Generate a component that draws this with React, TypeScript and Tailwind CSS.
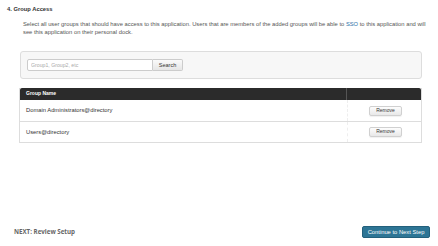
const groups = ["Domain Administrators@directory", "Users@directory"];

export default function App() {
  return (
    <div className="flex h-[246px] w-[438px] flex-col bg-white font-['Liberation_Sans',Arial,sans-serif]">
      <h2 className="pl-[7px] pt-[6px] text-[5.8px] font-bold leading-[6px] text-[#333]">4. Group Access</h2>

      <p className="ml-[23px] mt-[9px] text-[5.8px] leading-[7.5px] text-[#555]">
        Select all user groups that should have access to this application. Users that are members of the added groups will be able to{" "}
        <span className="text-[#2a6fa8]">SSO</span> to this application and will
        <br />
        see this application on their personal dock.
      </p>

      <div className="ml-[20px] mt-[15px] flex h-[28px] w-[402px] items-center rounded-[3px] border border-[#ddd] bg-[#f7f7f7] px-[6px]">
        <input
          placeholder="Group1, Group2, etc"
          className="h-[12px] w-[126px] rounded-l-[2px] border border-[#ccc] bg-white px-[3px] text-[5.2px] text-[#333] placeholder:text-[#aaa] outline-none"
        />
        <button className="h-[12px] w-[30px] rounded-r-[2px] border border-l-0 border-[#ccc] bg-gradient-to-b from-[#fafafa] to-[#e6e6e6] text-[5.5px] text-[#333]">
          Search
        </button>
      </div>

      <div className="ml-[19px] mt-[9px] w-[403px] border-x border-b border-[#ddd]">
        <div className="flex h-[12px] items-center rounded-t-[2px] bg-[#2b2b2b] text-[5px] font-bold text-white">
          <div className="flex h-full w-[327px] items-center border-r border-[#555] pl-[6px]">Group Name</div>
          <div className="flex-1" />
        </div>
        {groups.map((g, i) => (
          <div key={g} className={`flex h-[21px] items-center text-[5.8px] text-[#333] ${i > 0 ? "border-t border-[#ddd]" : ""}`}>
            <div className="flex h-full w-[328px] items-center border-r border-dashed border-[#eee] pl-[6px]">{g}</div>
            <div className="flex flex-1 justify-center pl-[2px]">
              <button className="h-[10px] w-[33px] rounded-[2px] border border-[#d0d0d0] bg-gradient-to-b from-[#fdfdfd] to-[#e8e8e8] text-[5px] text-[#333] shadow-[0_1px_1px_rgba(0,0,0,0.06)]">
                Remove
              </button>
            </div>
          </div>
        ))}
      </div>

      <div className="mt-auto flex items-center justify-between pb-[8px] pl-[14px] pr-[8px]">
        <span className="font-['Open_Sans',sans-serif] text-[6.2px] font-bold text-[#666]">NEXT: Review Setup</span>
        <button className="h-[12px] w-[68px] rounded-[2px] border border-[#23607c] bg-[#2d7595] text-[5.8px] text-white">
          Continue to Next Step
        </button>
      </div>
    </div>
  );
}
